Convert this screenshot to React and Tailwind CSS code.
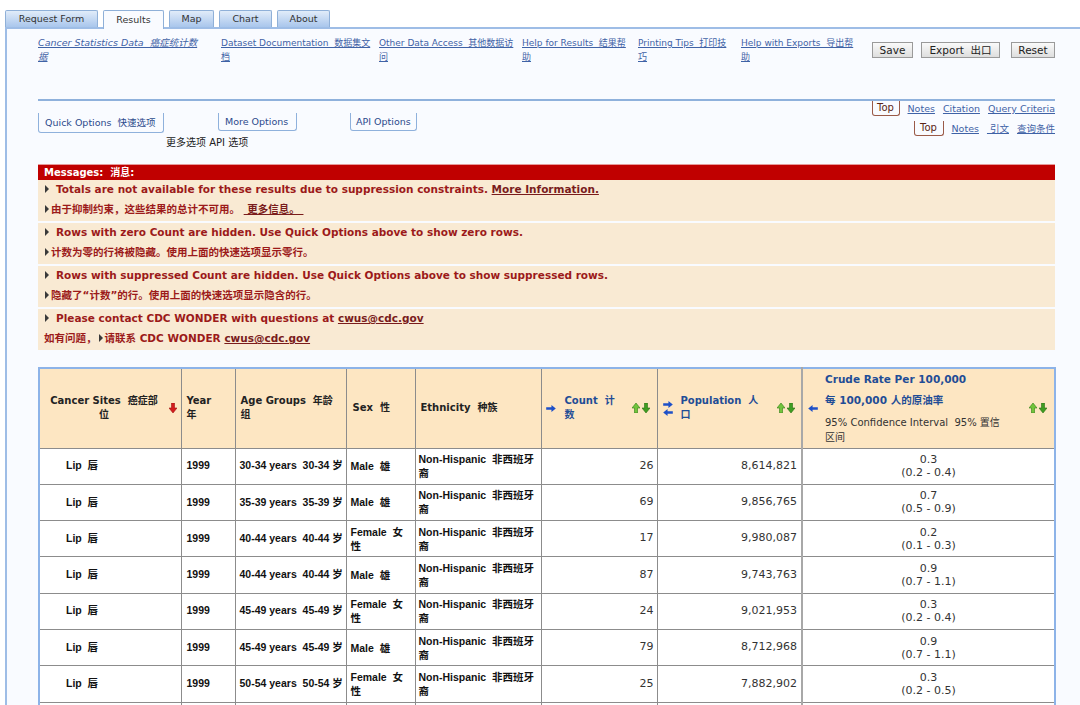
import React from 'react'

const SP = '\u00a0 '

const tabs = [
  { label: 'Request Form', cls: 'w-[93px]' },
  { label: 'Results', cls: 'w-[61px]', active: true },
  { label: 'Map', cls: 'w-[45px]' },
  { label: 'Chart', cls: 'w-[53px]' },
  { label: 'About', cls: 'w-[53px]' },
]

const rows = [
  ['30-34 years' + SP + '30-34 岁', false, '26', '8,614,821', '0.3', '(0.2 - 0.4)'],
  ['35-39 years' + SP + '35-39 岁', false, '69', '9,856,765', '0.7', '(0.5 - 0.9)'],
  ['40-44 years' + SP + '40-44 岁', true, '17', '9,980,087', '0.2', '(0.1 - 0.3)'],
  ['40-44 years' + SP + '40-44 岁', false, '87', '9,743,763', '0.9', '(0.7 - 1.1)'],
  ['45-49 years' + SP + '45-49 岁', true, '24', '9,021,953', '0.3', '(0.2 - 0.4)'],
  ['45-49 years' + SP + '45-49 岁', false, '79', '8,712,968', '0.9', '(0.7 - 1.1)'],
  ['50-54 years' + SP + '50-54 岁', true, '25', '7,882,902', '0.3', '(0.2 - 0.5)'],
]

const arrowPaths = {
  down: 'M2.5 0h3v5H8l-4 5-4-5h2.5z',
  up: 'M4 0l4 5H5.5v5h-3V5H0z',
  right: 'M0 2.5h6V0l5 4-5 4V5.5H0z',
  left: 'M11 2.5H5V0L0 4l5 4V5.5h6z',
}

function Arrow({ dir, fill, stroke }) {
  const vertical = dir === 'up' || dir === 'down'
  return (
    <svg
      width={vertical ? 8 : 10}
      height={vertical ? 10 : 7}
      viewBox={vertical ? '0 0 8 10' : '0 0 11 8'}
      className="block shrink-0"
    >
      <path d={arrowPaths[dir]} fill={fill} stroke={stroke || 'none'} strokeWidth="0.6" />
    </svg>
  )
}

function SortPair() {
  return (
    <span className="flex shrink-0 items-center gap-[2px]">
      <Arrow dir="up" fill="#72c43c" stroke="#2f7d14" />
      <Arrow dir="down" fill="#3f9d22" stroke="#2a7010" />
    </span>
  )
}

function Tri() {
  return (
    <svg width="4" height="8" viewBox="0 0 4 8" className="block shrink-0">
      <path d="M0 0L4 4L0 8Z" fill="#3a3a3a" />
    </svg>
  )
}

function TabBar() {
  return (
    <div className="flex items-end gap-[5px] pl-[5px] pt-[10px]">
      {tabs.map((t) =>
        t.active ? (
          <div
            key={t.label}
            className={`${t.cls} relative z-10 mb-[-2px] h-[19px] rounded-t-[2px] border border-b-0 border-[#8fb0d8] bg-[#f9fbff] text-center text-[9.5px] leading-[17px] text-[#333]`}
          >
            {t.label}
          </div>
        ) : (
          <div
            key={t.label}
            className={`${t.cls} h-[17px] rounded-t-[2px] border border-b-0 border-[#8fb0d8] bg-linear-to-b from-[#e1ecf9] to-[#a9c6ec] text-center text-[9.5px] leading-[16px] text-[#333]`}
          >
            {t.label}
          </div>
        )
      )}
    </div>
  )
}

function TopLinks() {
  const link = 'underline text-[#3f62a6]'
  const btn =
    'mt-[6px] h-[16px] border border-[#9a9a9a] bg-linear-to-b from-[#fafafa] to-[#dedede] text-center text-[10.5px] leading-[14px] text-[#222]'
  return (
    <div className="flex h-[70px] items-start pt-[7px] text-[9px] leading-[14px]">
      <div className="w-[183px]">
        <a className={`${link} italic text-[9.5px]`}>
          Cancer Statistics Data&nbsp; 癌症统计数
          <br />
          据
        </a>
      </div>
      <div className="w-[158px]">
        <a className={link}>
          Dataset Documentation&nbsp; 数据集文
          <br />
          档
        </a>
      </div>
      <div className="w-[143px]">
        <a className={link}>
          Other Data Access&nbsp; 其他数据访
          <br />
          问
        </a>
      </div>
      <div className="w-[116px]">
        <a className={link}>
          Help for Results&nbsp; 结果帮
          <br />
          助
        </a>
      </div>
      <div className="w-[103px]">
        <a className={link}>
          Printing Tips&nbsp; 打印技
          <br />
          巧
        </a>
      </div>
      <div className="w-[131px]">
        <a className={link}>
          Help with Exports&nbsp; 导出帮
          <br />
          助
        </a>
      </div>
      <button className={`${btn} w-[41px]`}>Save</button>
      <button className={`${btn} ml-[8px] w-[79px]`}>Export&nbsp; 出口</button>
      <button className={`${btn} ml-[11px] w-[44px]`}>Reset</button>
    </div>
  )
}

function OptionsRow() {
  const optTab =
    'border border-t-0 border-[#8fb1dc] rounded-b-[3px] text-[9.5px] text-[#2c4a8c]'
  const topBox =
    'h-[15px] border border-t-0 border-[#9a5a48] rounded-b-[3px] text-center text-[10px] leading-[14px] text-[#5a2414]'
  const link = 'underline text-[#3f62a6]'
  return (
    <div className="flex h-[63px] items-start justify-between">
      <div className="pt-[12px]">
        <div className="flex items-start">
          <div className={`${optTab} h-[20px] w-[126px] pl-[6px] leading-[20px]`}>
            Quick Options&nbsp; 快速选项
          </div>
          <div className={`${optTab} ml-[54px] h-[18px] w-[79px] pl-[6px] leading-[17px]`}>
            More Options
          </div>
          <div className={`${optTab} ml-[53px] h-[18px] w-[67px] pl-[5px] leading-[17px]`}>
            API Options
          </div>
        </div>
        <div className="mt-[3px] pl-[128px] text-[10px] leading-[14px] text-[#222]">
          更多选项 API 选项
        </div>
      </div>
      <div className="flex flex-col items-end text-[9.5px] leading-[15px]">
        <div className="flex items-start gap-[8px]">
          <span className={`${topBox} w-[28px]`}>Top</span>
          <a className={link}>Notes</a>
          <a className={link}>Citation</a>
          <a className={link}>Query Criteria</a>
        </div>
        <div className="mt-[5px] flex items-start gap-[8px]">
          <span className={`${topBox} w-[30px]`}>Top</span>
          <a className={link}>Notes</a>
          <a className={link}>&nbsp;引文</a>
          <a className={link}>查询条件</a>
        </div>
      </div>
    </div>
  )
}

function MsgLine({ children, zh, first }) {
  return (
    <div
      className={`flex items-center pl-[7px] leading-[16px] ${first ? 'pt-[1px]' : 'mt-[4px]'} ${
        zh ? 'gap-[2px]' : 'gap-[7px]'
      }`}
    >
      <Tri />
      <span>{children}</span>
    </div>
  )
}

function Messages() {
  const box = 'h-[41px] bg-[#f9ead3]'
  return (
    <div className="font-bold">
      <div className="h-[16px] border-t border-[#e69a9a] bg-[#c00000] pl-[6px] text-[10px] leading-[15px] text-white">
        Messages:&nbsp; 消息:
      </div>
      <div className="flex flex-col gap-[2px] text-[10.5px] text-[#9c1a1a]">
        <div className={box}>
          <MsgLine first>
            Totals are not available for these results due to suppression constraints.{' '}
            <a className="underline text-[#7a1c1c]">More Information.</a>
          </MsgLine>
          <MsgLine zh>
            由于抑制约束，这些结果的总计不可用。 <a className="underline text-[#7a1c1c]">&nbsp;更多信息。&nbsp;</a>
          </MsgLine>
        </div>
        <div className={box}>
          <MsgLine first>
            Rows with zero Count are hidden. Use Quick Options above to show zero rows.
          </MsgLine>
          <MsgLine zh>计数为零的行将被隐藏。使用上面的快速选项显示零行。</MsgLine>
        </div>
        <div className={box}>
          <MsgLine first>
            Rows with suppressed Count are hidden. Use Quick Options above to show suppressed rows.
          </MsgLine>
          <MsgLine zh>隐藏了“计数”的行。使用上面的快速选项显示隐含的行。</MsgLine>
        </div>
        <div className={box}>
          <MsgLine first>
            Please contact CDC WONDER with questions at{' '}
            <a className="underline text-[#7a1c1c]">cwus@cdc.gov</a>
          </MsgLine>
          <div className="mt-[4px] flex items-center gap-[2px] pl-[6px] leading-[16px]">
            <span>如有问题，</span>
            <Tri />
            <span>
              请联系 CDC WONDER <a className="underline text-[#7a1c1c]">cwus@cdc.gov</a>
            </span>
          </div>
        </div>
      </div>
    </div>
  )
}

function ResultsTable() {
  const th = 'border border-[#8c8c8c] bg-[#fde6c2] p-0 text-left align-middle font-bold'
  const td = 'border border-[#8c8c8c] p-0 align-middle'
  const bodyFont = "font-['Liberation_Sans','Noto_Sans_CJK_SC',sans-serif] font-bold text-[10.5px] text-[#111]"
  const blue = '#1e50c8'
  return (
    <table className="mt-[17px] w-full table-fixed border-collapse border-2 border-[#8db3e8] bg-white">
      <colgroup>
        <col className="w-[142px]" />
        <col className="w-[54px]" />
        <col className="w-[111px]" />
        <col className="w-[69px]" />
        <col className="w-[126px]" />
        <col className="w-[116px]" />
        <col className="w-[145px]" />
        <col className="w-[253px]" />
      </colgroup>
      <thead>
        <tr className="h-[80px] text-[10px] leading-[14px] text-[#222]">
          <th className={`${th} pl-[7px]`}>
            <div className="flex items-center">
              <div className="w-[114px] text-center">
                Cancer Sites&nbsp; 癌症部
                <br />
                位
              </div>
              <span className="ml-[8px]">
                <Arrow dir="down" fill="#d41c1c" stroke="#a01010" />
              </span>
            </div>
          </th>
          <th className={`${th} pl-[5px]`}>
            Year
            <br />
            年
          </th>
          <th className={`${th} pl-[5px]`}>
            Age Groups&nbsp; 年龄
            <br />
            组
          </th>
          <th className={`${th} pl-[6px]`}>Sex&nbsp; 性</th>
          <th className={`${th} pl-[5px]`}>Ethnicity&nbsp; 种族</th>
          <th className={`${th} pl-[4px] pr-[7px]`}>
            <div className="flex items-center text-[#1f4d96]">
              <Arrow dir="right" fill={blue} />
              <div className="ml-[9px] flex-1">
                Count&nbsp; 计
                <br />
                数
              </div>
              <SortPair />
            </div>
          </th>
          <th className={`${th} border-r-2 border-r-[#a8a8a8] pl-[5px] pr-[6px]`}>
            <div className="flex items-center text-[#1f4d96]">
              <span className="flex flex-col gap-[1px]">
                <Arrow dir="right" fill={blue} />
                <Arrow dir="left" fill={blue} />
              </span>
              <div className="ml-[8px] flex-1">
                Population&nbsp; 人
                <br />
                口
              </div>
              <SortPair />
            </div>
          </th>
          <th className={`${th} pl-[5px] pr-[7px]`}>
            <div className="flex items-center">
              <Arrow dir="left" fill={blue} />
              <div className="ml-[7px] flex-1 text-[10.5px]">
                <div className="leading-[14px] text-[#1f4d96]">Crude Rate Per 100,000</div>
                <div className="mt-[7px] leading-[14px] text-[#1f4d96]">每 100,000 人的原油率</div>
                <div className="mt-[8px] text-[10px] font-normal leading-[15px] text-[#333]">
                  95% Confidence Interval&nbsp; 95% 置信
                  <br />
                  区间
                </div>
              </div>
              <SortPair />
            </div>
          </th>
        </tr>
      </thead>
      <tbody>
        {rows.map(([age, female, count, pop, rate, ci], i) => (
          <tr key={i} className="h-[36.3px]">
            <td className={`${td} ${bodyFont} pl-[26px]`}>Lip&nbsp; 唇</td>
            <td className={`${td} ${bodyFont} pl-[5px]`}>1999</td>
            <td className={`${td} ${bodyFont} whitespace-nowrap pl-[4px]`}>{age}</td>
            <td className={`${td} ${bodyFont} pl-[4px] leading-[14px]`}>
              {female ? (
                <>
                  Female&nbsp; 女
                  <br />
                  性
                </>
              ) : (
                <>Male&nbsp; 雄</>
              )}
            </td>
            <td className={`${td} ${bodyFont} pl-[3px] leading-[14px]`}>
              Non-Hispanic&nbsp; 非西班牙
              <br />
              裔
            </td>
            <td className={`${td} pr-[3px] text-right text-[11px] text-[#333]`}>{count}</td>
            <td className={`${td} border-r-2 border-r-[#a8a8a8] pr-[4px] text-right text-[11px] text-[#333]`}>
              {pop}
            </td>
            <td className={`${td} text-center text-[11px] leading-[13px] text-[#333]`}>
              {rate}
              <br />
              {ci}
            </td>
          </tr>
        ))}
        <tr className="h-[36.3px]">
          <td className={td} />
          <td className={td} />
          <td className={td} />
          <td className={td} />
          <td className={td} />
          <td className={td} />
          <td className={`${td} border-r-2 border-r-[#a8a8a8]`} />
          <td className={td} />
        </tr>
      </tbody>
    </table>
  )
}

export default function App() {
  return (
    <div className="min-h-screen bg-white text-[#222] font-['DejaVu_Sans','Noto_Sans_CJK_SC',sans-serif]">
      <TabBar />
      <div className="ml-[5px] border-l-2 border-t-2 border-[#9ebde6] bg-[#f9fbff] pb-10 pl-[31px] pr-[25px]">
        <TopLinks />
        <div className="h-[2px] bg-[#8fb1dc]" />
        <OptionsRow />
        <Messages />
        <ResultsTable />
      </div>
    </div>
  )
}
